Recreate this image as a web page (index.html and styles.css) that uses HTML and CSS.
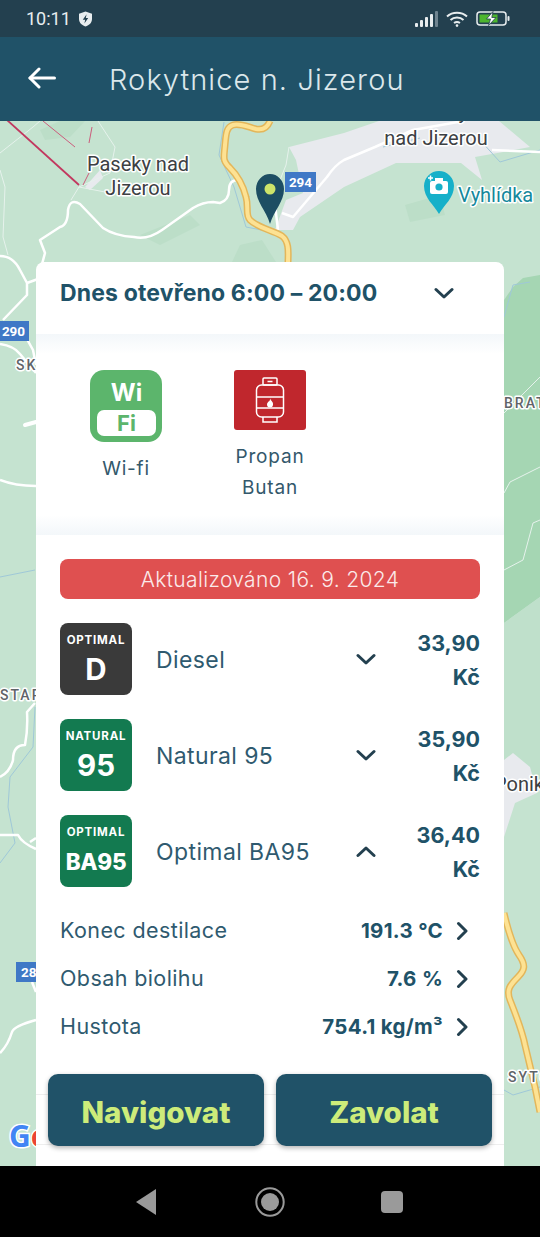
FILE: index.html
```html
<!DOCTYPE html>
<html lang="cs">
<head>
  <meta charset="UTF-8" />
  <meta name="viewport" content="width=device-width, initial-scale=1.0"/>
  <title>Rokytnice n. Jizerou</title>
  <link rel="stylesheet" href="styles.css">
</head>
<body>
  <div class="phone">

    <div class="status-bar">
      <span class="clock">10:11</span>
      <svg class="shield" width="15" height="16" viewBox="0 0 15 16">
        <path d="M7.5 0.5 L14 2.8 V8 C14 11.6 11.2 14.4 7.5 15.5 C3.8 14.4 1 11.6 1 8 V2.8 Z" fill="#e8edef"/>
        <path d="M8.6 3.2 L4.8 8.8 H7.2 L6.4 12.6 L10.2 7 H7.8 Z" fill="#23404f"/>
      </svg>
      <span class="status-space"></span>
      <svg class="signal" width="23" height="16" viewBox="0 0 23 16">
        <rect x="0" y="12" width="3" height="4" rx="1" fill="#e8edef"/>
        <rect x="5" y="9" width="3" height="7" rx="1" fill="#e8edef"/>
        <rect x="10" y="6" width="3" height="10" rx="1" fill="#e8edef"/>
        <rect x="15" y="3" width="3" height="13" rx="1" fill="#e8edef"/>
        <rect x="20" y="0" width="3" height="16" rx="1" fill="#6f8490"/>
      </svg>
      <svg class="wifi" width="22" height="16" viewBox="0 0 22 16" fill="none" stroke="#e8edef" stroke-width="2">
        <path d="M1 5.5 C6.5 0.5 15.5 0.5 21 5.5"/>
        <path d="M4.5 9 C8 5.8 14 5.8 17.5 9"/>
        <path d="M8 12 C9.8 10.8 12.2 10.8 14 12"/>
        <circle cx="11" cy="14.6" r="1.3" fill="#e8edef" stroke="none"/>
      </svg>
      <svg class="battery" width="34" height="15" viewBox="0 0 34 15">
        <rect x="1" y="1" width="29" height="13" rx="3" fill="none" stroke="#e8edef" stroke-width="1.5"/>
        <rect x="3.5" y="3.5" width="18" height="8" fill="#4cb52e"/>
        <rect x="31.5" y="5" width="2" height="5" rx="1" fill="#e8edef"/>
        <path d="M17 0.5 L10.5 8 H14.5 L12.5 14.5 L20 6.5 H15.8 Z" fill="#fff" stroke="#23404f" stroke-width="0.8"/>
      </svg>
    </div>

    <header class="app-bar">
      <svg class="back" width="28" height="22" viewBox="0 0 28 22" fill="none" stroke="#fff" stroke-width="3" stroke-linecap="round" stroke-linejoin="round">
        <path d="M2 11 H26.5"/>
        <path d="M11 2 L2 11 L11 20"/>
      </svg>
      <h1>Rokytnice n. Jizerou</h1>
    </header>

    <main class="map">
      <svg class="map-canvas" width="540" height="1045" viewBox="0 121 540 1045">
        <rect x="0" y="121" width="540" height="1045" fill="#c5e3d0"/>
        <!-- les vpravo -->
        <path class="forest" d="M504 300 L513 287 L523 278 L540 275 V597 L504 623 Z"/>
        <path class="forest-light" d="M504 623 L540 597 V790 H504 Z"/>
        <path class="patch" d="M140 235 L190 215 L200 225 L160 245 Z"/>
        <path class="patch" d="M240 245 L262 240 L276 262 H232 Z"/>
        <path class="patch" d="M405 205 L440 195 L445 215 L410 222 Z"/>
        <path class="patch" d="M40 130 L60 121 L85 121 L70 137 L45 140 Z"/>

        <!-- zastavba -->
        <path class="built" d="M289 147 L344 133 L379 121 L499 121 L530 147 L475 157 L482 180 L461 163 L396 163 L344 187 L300 217 L293 230 L275 230 L286 200 L303 193 L296 160 Z"/>
        <path class="built" d="M504 760 L513 753 L530 767 L537 793 L515 803 L504 837 Z"/>
        <path class="built" d="M85 187 L100 170 L103 178 L90 190 Z"/>

        <!-- voda -->
        <path class="water" d="M224 122 L219 155 L234 187 L246 227 L272 232"/>
        <path class="water" d="M0 577 L35 570"/>
        <path class="water" d="M35 707 L33 747 L10 777 L8 807 L15 843 L0 863"/>
        <path class="water" d="M504 317 L513 285 L530 282"/>
        <path class="water" d="M504 1090 L513 1095 L540 1087"/>
        <path class="water" d="M383 147 L420 138 M480 140 L500 162 L540 150"/>

        <!-- silnice -->
        <path class="road" d="M238 180 Q229 180 229 190 Q229 200 220 203 L213 202 Q203 202 193 208 L162 230 Q148 240 134 237 Q115 236 103 228 L80 204 Q70 198 68 210 Q68 225 60 227 L40 240 L45 253 L38 279 L27 283"/>
        <path class="road" d="M0 256 Q13 256 20 270 L27 283 L27 295 L3 320"/>
        <path class="road" d="M23 332 L33 350 L36 365"/>
        <path class="road" d="M0 344 Q14 346 20 354 L36 373"/>
        <path class="road road-thick" d="M25 425 L36 422"/>
        <path class="road" d="M0 480 Q15 486 36 486"/>
        <path class="road" d="M0 777 Q10 772 13 760 Q13 745 25 745 Q28 730 27 712 L35 703"/>
        <path class="road" d="M0 835 H18 Q22 843 36 849 M30 842 L36 838"/>
        <path class="road" d="M32 982 L36 992"/>
        <path class="road" d="M0 1053 Q8 1045 12 1032 Q14 1026 36 1020"/>
        <path class="road" d="M282 213 L293 217 L327 177 Q335 165 344 160 L375 147 L413 130 L458 122"/>
        <path class="road" d="M492 150 L540 152"/>
        <path class="road" d="M275 205 L278 230"/>
        <path class="lane" d="M0 153 L33 127 L40 121"/>
        <path class="lane" d="M0 170 L5 187 L3 237 L8 255"/>
        <path class="lane" d="M98 121 L115 147 L110 173 L79 187 L71 200"/>
        <path class="lane" d="M79 187 L105 192"/>
        <path class="lane" d="M289 147 L286 165 L280 180"/>
        <path class="lane" d="M504 413 L540 377"/>
        <path class="lane" d="M504 493 L510 482 L540 467"/>
        <path class="lane" d="M504 570 L523 560 L533 523 L540 520"/>

        <!-- hlavni silnice -->
        <path class="main-road-edge" d="M270 121 Q266 131 256 129 C248 127 240 123 233 125 C226 127 226 135 225 145 C224 158 222 160 230 168 C238 176 243 185 246 197 C249 207 245 215 250 220 C258 228 272 230 282 236 C290 242 288 255 288 263"/>
        <path class="main-road" d="M270 121 Q266 131 256 129 C248 127 240 123 233 125 C226 127 226 135 225 145 C224 158 222 160 230 168 C238 176 243 185 246 197 C249 207 245 215 250 220 C258 228 272 230 282 236 C290 242 288 255 288 263"/>
        <path class="main-road-edge" d="M504 913 C508 930 512 945 519 955 C526 965 525 970 518 977 C510 985 506 990 510 1000 C516 1015 522 1030 525 1045 L535 1087 L540 1112"/>
        <path class="main-road" d="M504 913 C508 930 512 945 519 955 C526 965 525 970 518 977 C510 985 506 990 510 1000 C516 1015 522 1030 525 1045 L535 1087 L540 1112"/>

        <!-- lanovky -->
        <path class="lift" d="M7 120 L79 185"/>
        <path class="lift-thin" d="M43 121 L75 147 M92 127 L89 143 M89 173 L83 185"/>

        <!-- popisky -->
        <text class="place" x="138" y="171" text-anchor="middle">Paseky nad</text>
        <text class="place" x="138" y="195" text-anchor="middle">Jizerou</text>
        <text class="place" x="436" y="145" text-anchor="middle">nad Jizerou</text>
        <text class="place" x="436" y="119" text-anchor="middle">Paseky</text>
        <text class="place" x="494" y="791">Ponik</text>
        <text class="poi" x="458" y="202">Vyhlídka</text>
        <text class="locality" x="16" y="370">SK</text>
        <text class="locality" x="0" y="700">STAR.</text>
        <text class="locality" x="504" y="408">BRAT</text>
        <text class="locality" x="508" y="1082">SYTO</text>

        <rect class="shield-route" x="285" y="172" width="31" height="20"/>
        <text class="route" x="300.5" y="187" text-anchor="middle">294</text>
        <rect class="shield-route" x="0" y="321" width="29" height="20"/>
        <text class="route" x="13.5" y="336" text-anchor="middle">290</text>
        <rect class="shield-route" x="16" y="962" width="24" height="20"/>
        <text class="route" x="21" y="977">28</text>

        <!-- znacka vyhlidky -->
        <path d="M439 214 C434 205 424 198 424 186 A15 15 0 0 1 454 186 C454 198 444 205 439 214 Z" fill="#16b0c9"/>
        <rect x="430" y="181" width="18" height="13" rx="2" fill="#fff"/>
        <rect x="435" y="178" width="8" height="4" fill="#fff"/>
        <circle cx="439" cy="187" r="3.6" fill="#16b0c9"/>
        <path d="M428 178 H433 M430.5 175.5 V180.5" stroke="#fff" stroke-width="1.5"/>

        <!-- pin cerpaci stanice -->
        <path d="M270 224 C266 210 256 202 256 189 A14 15 0 0 1 284 189 C284 202 274 210 270 224 Z" fill="#1d4e63"/>
        <circle cx="270" cy="189" r="5.5" fill="#cde46a"/>

        <!-- logo google -->
        <text class="google" x="9" y="1147"><tspan fill="#4285f4">G</tspan><tspan fill="#ea4335">o</tspan></text>
      </svg>

      <section class="card">
        <div class="hours">
          <span class="hours-text">Dnes otevřeno 6:00 – 20:00</span>
          <svg class="hours-arrow" width="20" height="13" viewBox="0 0 20 13" fill="none" stroke="#23404f" stroke-width="3" stroke-linecap="round" stroke-linejoin="round">
            <path d="M2 2.5 L10 10 L18 2.5"/>
          </svg>
        </div>

        <div class="services">
          <div class="service">
            <div class="wifi-icon">
              <span class="wifi-top">Wi</span>
              <span class="wifi-bottom">Fi</span>
            </div>
            <span class="service-name">Wi-fi</span>
          </div>
          <div class="service">
            <svg class="gas-icon" width="72" height="60" viewBox="0 0 72 60" fill="none" stroke="#fff" stroke-width="1.5">
              <rect x="29" y="8" width="14" height="7" rx="1"/>
              <path d="M33.5 11.5 H38.5"/>
              <rect x="22.5" y="15" width="27" height="32" rx="5"/>
              <path d="M22.5 27 H49.5 M22.5 38 H49.5"/>
              <path d="M29 47 V52 H43 V47"/>
              <path d="M36 28.5 C37 31 39.5 32 39 34.5 A3 3 0 0 1 33 34.5 C33 33 34 32.5 34.5 31.5 C35.5 31.5 36.2 30 36 28.5 Z" fill="#fff" stroke="none"/>
            </svg>
            <span class="service-name">Propan<br>Butan</span>
          </div>
        </div>

        <div class="fuels">
          <div class="updated">Aktualizováno 16. 9. 2024</div>

          <div class="fuel">
            <div class="fuel-badge badge-dark">
              <span class="badge-top">OPTIMAL</span>
              <span class="badge-main">D</span>
            </div>
            <span class="fuel-name">Diesel</span>
            <svg class="fuel-arrow" width="20" height="13" viewBox="0 0 20 13" fill="none" stroke="#23404f" stroke-width="3" stroke-linecap="round" stroke-linejoin="round">
              <path d="M2 2.5 L10 10 L18 2.5"/>
            </svg>
            <div class="fuel-price"><span>33,90</span><span>Kč</span></div>
          </div>

          <div class="fuel">
            <div class="fuel-badge badge-green">
              <span class="badge-top">NATURAL</span>
              <span class="badge-main">95</span>
            </div>
            <span class="fuel-name">Natural 95</span>
            <svg class="fuel-arrow" width="20" height="13" viewBox="0 0 20 13" fill="none" stroke="#23404f" stroke-width="3" stroke-linecap="round" stroke-linejoin="round">
              <path d="M2 2.5 L10 10 L18 2.5"/>
            </svg>
            <div class="fuel-price"><span>35,90</span><span>Kč</span></div>
          </div>

          <div class="fuel">
            <div class="fuel-badge badge-green">
              <span class="badge-top">OPTIMAL</span>
              <span class="badge-main badge-long">BA95</span>
            </div>
            <span class="fuel-name">Optimal BA95</span>
            <svg class="fuel-arrow" width="20" height="13" viewBox="0 0 20 13" fill="none" stroke="#23404f" stroke-width="3" stroke-linecap="round" stroke-linejoin="round">
              <path d="M2 10.5 L10 3 L18 10.5"/>
            </svg>
            <div class="fuel-price"><span>36,40</span><span>Kč</span></div>
          </div>

          <div class="details">
            <div class="detail">
              <span class="detail-name">Konec destilace</span>
              <span class="detail-value">191.3 °C</span>
              <svg class="detail-arrow" width="12" height="20" viewBox="0 0 12 20" fill="none" stroke="#23404f" stroke-width="3" stroke-linecap="round" stroke-linejoin="round">
                <path d="M2.5 2.5 L10 10 L2.5 17.5"/>
              </svg>
            </div>
            <div class="detail">
              <span class="detail-name">Obsah biolihu</span>
              <span class="detail-value">7.6 %</span>
              <svg class="detail-arrow" width="12" height="20" viewBox="0 0 12 20" fill="none" stroke="#23404f" stroke-width="3" stroke-linecap="round" stroke-linejoin="round">
                <path d="M2.5 2.5 L10 10 L2.5 17.5"/>
              </svg>
            </div>
            <div class="detail">
              <span class="detail-name">Hustota</span>
              <span class="detail-value">754.1 kg/m³</span>
              <svg class="detail-arrow" width="12" height="20" viewBox="0 0 12 20" fill="none" stroke="#23404f" stroke-width="3" stroke-linecap="round" stroke-linejoin="round">
                <path d="M2.5 2.5 L10 10 L2.5 17.5"/>
              </svg>
            </div>
          </div>
        </div>

        <div class="actions">
          <button class="action">Navigovat</button>
          <button class="action">Zavolat</button>
        </div>
      </section>
    </main>

    <nav class="nav-bar">
      <svg class="nav-back" width="20" height="26" viewBox="0 0 20 26"><path d="M20 0 V26 L0 13 Z" fill="#9a9a9a"/></svg>
      <svg width="30" height="30" viewBox="0 0 30 30">
        <circle cx="15" cy="15" r="13.7" fill="none" stroke="#9a9a9a" stroke-width="2"/>
        <circle cx="15" cy="15" r="9" fill="#9a9a9a"/>
      </svg>
      <svg width="22" height="22" viewBox="0 0 22 22"><rect width="22" height="22" rx="4" fill="#9a9a9a"/></svg>
    </nav>

  </div>
</body>
</html>
```

FILE: styles.css
```css
* {
  box-sizing: border-box;
}

html, body {
  margin: 0;
  padding: 0;
}

body {
  font-family: Inter, "Open Sans", sans-serif;
  background-color: #000;
  color: #205268;
}

.phone {
  width: 540px;
  height: 1237px;
  display: flex;
  flex-direction: column;
  overflow: hidden;
}

/* status bar */
.status-bar {
  height: 37px;
  background: #23404f;
  display: flex;
  align-items: center;
  padding: 5px 30px 5px 26px;
  color: #e8edef;
}

.clock {
  font-family: Roboto, sans-serif;
  font-size: 18px;
  font-weight: 400;
}

.shield {
  margin-left: 7px;
}

.status-space {
  flex: 1;
}

.wifi {
  margin-left: 8px;
}

.battery {
  margin-left: 8px;
}

/* app bar */
.app-bar {
  height: 84px;
  background: #205268;
  display: flex;
  align-items: center;
  padding: 0 0 2px 28px;
}

.app-bar h1 {
  margin: 3px 0 0 53px;
  font-size: 29px;
  font-weight: 300;
  letter-spacing: 1.1px;
  color: #dbe7eb;
}

/* map */
.map {
  position: relative;
  height: 1045px;
  padding: 141px 36px 0;
  overflow: hidden;
}

.map-canvas {
  position: absolute;
  left: 0;
  top: 0;
}

.forest { fill: #a5d6b3; }
.forest-light { fill: #bfe0cb; }
.patch { fill: #bcdec8; }
.built { fill: #e8eaee; }

.water {
  fill: none;
  stroke: #9fc8d8;
  stroke-width: 1;
}

.road {
  fill: none;
  stroke: #fff;
  stroke-width: 2.5;
  stroke-linejoin: round;
}

.road-thick {
  stroke-width: 4;
  stroke-linecap: round;
}

.lane {
  fill: none;
  stroke: #e6f2ec;
  stroke-width: 1;
}

.main-road-edge {
  fill: none;
  stroke: #e3b65a;
  stroke-width: 7;
  stroke-linejoin: round;
}

.main-road {
  fill: none;
  stroke: #fde293;
  stroke-width: 4;
  stroke-linejoin: round;
}

.lift {
  stroke: #c2385f;
  stroke-width: 1.8;
}

.lift-thin {
  fill: none;
  stroke: #cc5c7c;
  stroke-width: 1;
}

.place, .poi, .locality {
  font-family: Roboto, sans-serif;
  paint-order: stroke;
  stroke: #fff;
  stroke-width: 3px;
  stroke-linejoin: round;
}

.place {
  font-size: 20px;
  fill: #3c4043;
}

.poi {
  font-size: 20px;
  fill: #15889c;
}

.locality {
  font-size: 14px;
  font-weight: 500;
  letter-spacing: 2px;
  fill: #5f6368;
}

.shield-route {
  fill: #3f78c6;
}

.route {
  font-family: Roboto, sans-serif;
  font-size: 13.5px;
  font-weight: 700;
  fill: #fff;
}

.google {
  font-family: "Open Sans", sans-serif;
  font-size: 30px;
  font-weight: 700;
  paint-order: stroke;
  stroke: #fff;
  stroke-width: 3px;
}

/* card */
.card {
  position: relative;
  width: 468px;
  height: 904px;
  background: #fff;
  border-radius: 8px 8px 0 0;
}

.hours {
  height: 72px;
  display: flex;
  align-items: center;
  padding: 0 50px 10px 24px;
}

.hours-text {
  flex: 1;
  font-size: 23px;
  font-weight: 700;
  letter-spacing: 0.15px;
  color: #205268;
}

.services {
  height: 201px;
  display: flex;
  align-items: flex-start;
  padding: 36px 18px 0;
  background: linear-gradient(#f3f7fa, #fff 20px, #fff 181px, #f3f7fa);
}

.service {
  width: 144px;
  display: flex;
  flex-direction: column;
  align-items: center;
}

.service-name {
  margin-top: 11px;
  font-size: 19px;
  line-height: 31px;
  letter-spacing: 0.8px;
  text-align: center;
  color: #33586b;
}

.wifi-icon {
  width: 72px;
  height: 72px;
  padding: 6px 6px 6px 7px;
  border-radius: 14px;
  background: #5cb56c;
  display: flex;
  flex-direction: column;
  align-items: stretch;
  text-align: center;
}

.wifi-top {
  height: 34px;
  font-size: 24px;
  font-weight: 700;
  line-height: 34px;
  color: #fff;
}

.wifi-bottom {
  height: 26px;
  border-radius: 7px;
  background: #fff;
  font-size: 22px;
  font-weight: 700;
  line-height: 27px;
  color: #5cb56c;
}

.gas-icon {
  background: #c0272d;
  border-radius: 3px;
}

.fuels {
  padding: 24px 24px 0;
}

.updated {
  height: 40px;
  margin-bottom: 24px;
  border-radius: 8px;
  background: #df5050;
  color: #fbeaea;
  font-size: 21px;
  font-weight: 300;
  letter-spacing: 0.35px;
  line-height: 41px;
  text-align: center;
}

.fuel {
  height: 72px;
  margin-bottom: 24px;
  display: flex;
  align-items: center;
}

.fuel-badge {
  width: 72px;
  height: 72px;
  border-radius: 8px;
  display: flex;
  flex-direction: column;
  align-items: center;
  color: #fff;
}

.badge-dark { background: #3a3a3a; }
.badge-green { background: #137a50; }

.badge-top {
  margin-top: 10px;
  font-size: 11.5px;
  font-weight: 700;
  line-height: 14px;
  letter-spacing: 0.8px;
}

.badge-main {
  margin-top: 5px;
  font-size: 29.5px;
  font-weight: 700;
  line-height: 34px;
}

.badge-long {
  margin-top: 6px;
  font-size: 22.5px;
  font-weight: 800;
  letter-spacing: -0.3px;
}

.fuel-name {
  flex: 1;
  margin-left: 24px;
  padding-top: 2px;
  font-size: 23px;
  font-weight: 400;
  letter-spacing: 0.4px;
  color: #2f5a6f;
}

.fuel-arrow {
  margin-right: 104px;
}

.fuel-price {
  width: 0;
  padding-top: 2px;
  display: flex;
  flex-direction: column;
  align-items: flex-end;
  font-size: 21.5px;
  font-weight: 700;
  line-height: 34px;
  white-space: nowrap;
  color: #205268;
}

.details {
  margin-top: -5px;
}

.detail {
  height: 48px;
  display: flex;
  align-items: center;
}

.detail-name {
  flex: 1;
  font-size: 21.5px;
  font-weight: 400;
  letter-spacing: 0.4px;
  color: #2f5a6f;
}

.detail-value {
  font-size: 20.5px;
  font-weight: 700;
  letter-spacing: 0.3px;
  color: #205268;
}

.detail-arrow {
  margin: 2px 12px 0 13px;
}

.actions {
  position: relative;
  margin-top: 24px;
  padding: 0 12px;
  display: flex;
  gap: 12px;
  background:
    linear-gradient(#eeeeee, #eeeeee) 0 20px / 100% 1px no-repeat,
    linear-gradient(#eeeeee, #eeeeee) 0 70px / 100% 1px no-repeat;
}

.action {
  flex: 1;
  height: 72px;
  padding-top: 4px;
  border: 0;
  border-radius: 10px;
  background: #205268;
  box-shadow: 0 2px 5px rgba(0, 0, 0, 0.3);
  color: #cdec7a;
  font-family: Inter, sans-serif;
  font-size: 29.5px;
  font-weight: 800;
}

/* android nav */
.nav-bar {
  height: 71px;
  background: #000;
  display: flex;
  align-items: center;
  padding: 0 0 0 136px;
  gap: 96px;
}

.nav-back {
  margin-right: 3px;
}
```
